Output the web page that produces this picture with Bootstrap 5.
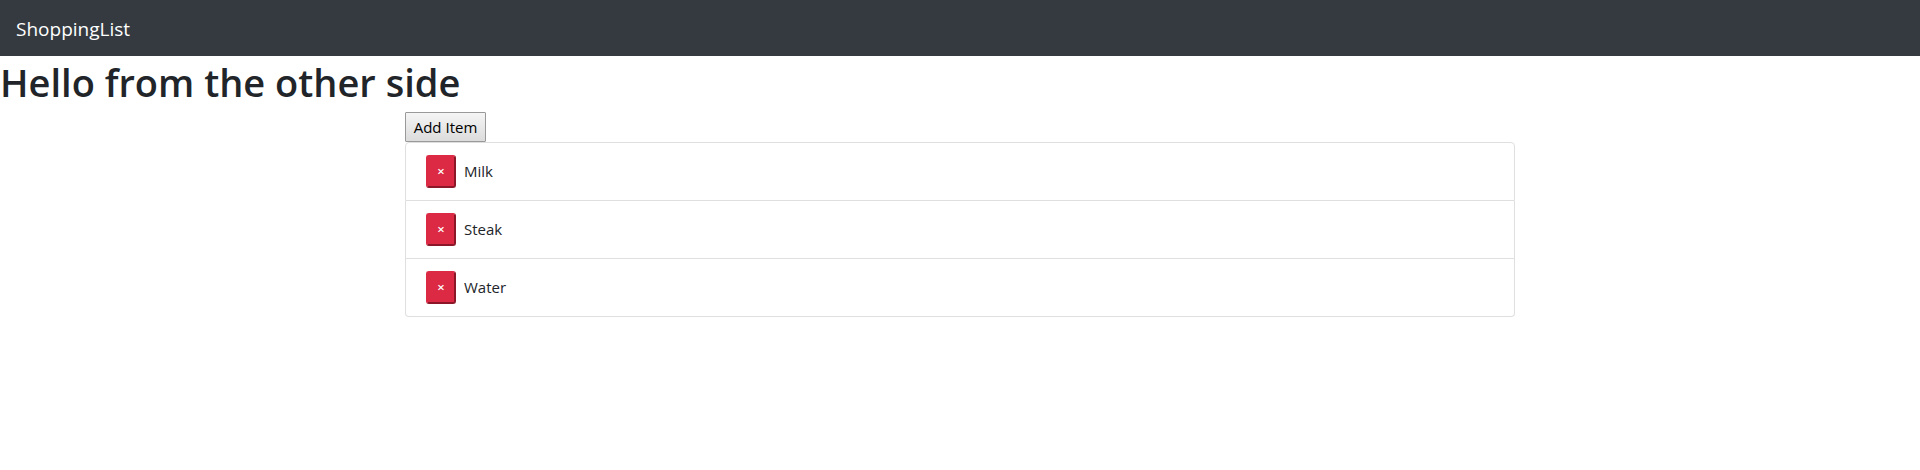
<!DOCTYPE html>
<html lang="en">
<head>
<meta charset="utf-8">
<meta name="viewport" content="width=device-width, initial-scale=1">
<title>ShoppingList</title>
<link href="https://cdn.jsdelivr.net/npm/bootstrap@5.3.0/dist/css/bootstrap.min.css" rel="stylesheet">
<style>
  body { font-family: "Segoe UI", "Open Sans", "Noto Sans", sans-serif; color: #212529; background: #fff; }
  .top-bar { background: #343a40; min-height: 56px; }
  .top-bar .navbar-brand { font-size: 19px; line-height: 30px; padding: 2px 0 0; }
  .page-title { font-size: 38px; line-height: 48px; padding-top: 2px; margin-bottom: 6px; font-weight: 600; }
  .shop { max-width: 1110px; }
  .add-button {
    min-width: 81px; height: 30px; padding: 0 7px; font-size: 15px; line-height: 24px; color: #000;
    border: 1px solid #999; border-radius: 1px;
    background: linear-gradient(#f5f5f5, #dcdcdc);
  }
  .shop-list { --bs-list-group-border-color: #dfdfdf; --bs-list-group-border-radius: 4px; }
  .shop-item { padding: 12px 20px; font-size: 15px; line-height: 24px; color: #212529; }
  .shop-item span { padding-bottom: 2px; }
  .remove-button {
    width: 30px; height: 33px; padding: 0; font-size: 13px; font-weight: 600; line-height: 21px; color: #fff;
    background: #dc2a44; border: 2px solid; border-color: #dc2a44 #8c1728 #8c1728 #dc2a44; border-radius: 3px;
  }
</style>
</head>
<body>
<nav class="navbar top-bar px-3 py-0" data-bs-theme="dark">
  <a class="navbar-brand text-white m-0" href="#">ShoppingList</a>
</nav>
<h1 class="page-title">Hello from the other side</h1>
<main class="shop container p-0">
  <button type="button" class="add-button d-block">Add Item</button>
  <ul class="list-group shop-list">
    <li class="list-group-item shop-item d-flex align-items-center gap-2"><button type="button" class="remove-button" aria-label="Remove Milk">×</button><span>Milk</span></li>
    <li class="list-group-item shop-item d-flex align-items-center gap-2"><button type="button" class="remove-button" aria-label="Remove Steak">×</button><span>Steak</span></li>
    <li class="list-group-item shop-item d-flex align-items-center gap-2"><button type="button" class="remove-button" aria-label="Remove Water">×</button><span>Water</span></li>
  </ul>
</main>
<script src="https://cdn.jsdelivr.net/npm/bootstrap@5.3.0/dist/js/bootstrap.bundle.min.js"></script>
</body>
</html>
